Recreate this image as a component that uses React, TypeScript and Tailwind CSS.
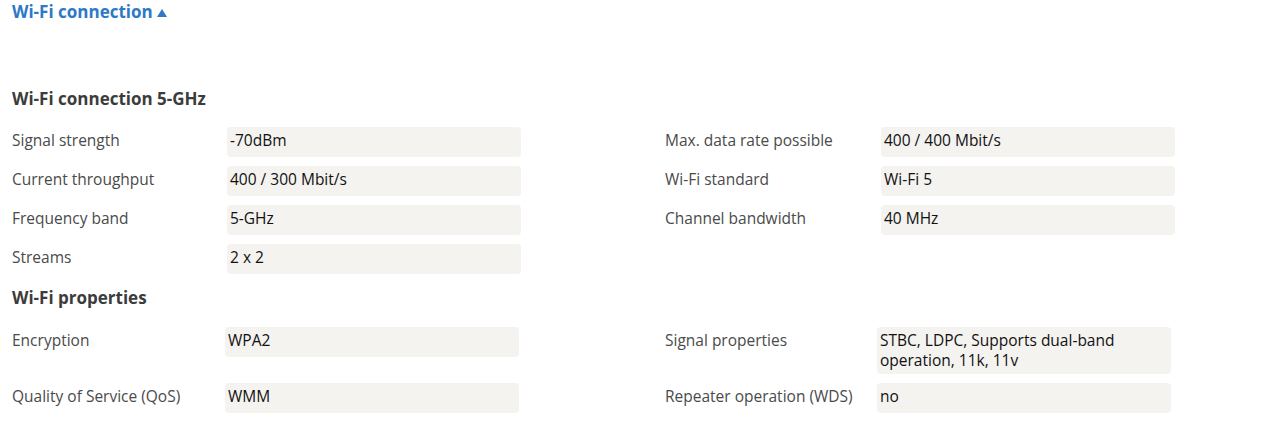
import React from "react";

const font = "font-['Open_Sans','Liberation_Sans',sans-serif]";

function Label({ children }: { children: React.ReactNode }) {
  return <div className="pt-[3px] text-[15.5px] leading-[20px] text-[#4a4a4a]">{children}</div>;
}

function Value({ children, h = "h-[30px]" }: { children: React.ReactNode; h?: string }) {
  return (
    <div className={`${h} rounded-[4px] bg-[#f4f3f0] px-[3px] pt-[3px] text-[15.5px] leading-[20px] text-[#111]`}>
      {children}
    </div>
  );
}

export default function App() {
  return (
    <div className={`${font} w-[1267px] h-[443px] bg-white pl-[12px]`}>
      <div className="flex items-center h-[24px] text-[17px] font-bold text-[#2d78c8]">
        <span>Wi-Fi connection</span>
        <svg width="10" height="8" viewBox="0 0 10 8" className="ml-[4px] mt-[1px]">
          <polygon points="5,0 10,8 0,8" fill="#2d78c8" />
        </svg>
      </div>

      <h2 className="mt-[63px] h-[24px] text-[17px] leading-[24px] font-bold text-[#3c3c3c]">
        Wi-Fi connection 5-GHz
      </h2>

      <div className="mt-[16px] grid grid-cols-[215px_294px_144px_216px_294px] gap-y-[9px]">
        <Label>Signal strength</Label>
        <Value>-70dBm</Value>
        <div />
        <Label>Max. data rate possible</Label>
        <Value>400 / 400 Mbit/s</Value>

        <Label>Current throughput</Label>
        <Value>400 / 300 Mbit/s</Value>
        <div />
        <Label>Wi-Fi standard</Label>
        <Value>Wi-Fi 5</Value>

        <Label>Frequency band</Label>
        <Value>5-GHz</Value>
        <div />
        <Label>Channel bandwidth</Label>
        <Value>40 MHz</Value>

        <Label>Streams</Label>
        <Value>2 x 2</Value>
      </div>

      <h2 className="mt-[12px] h-[24px] text-[17px] leading-[24px] font-bold text-[#3c3c3c]">
        Wi-Fi properties
      </h2>

      <div className="mt-[17px] grid grid-cols-[213px_294px_146px_212px_294px] gap-y-[9px]">
        <Label>Encryption</Label>
        <Value>WPA2</Value>
        <div />
        <Label>Signal properties</Label>
        <Value h="h-[47px]">STBC, LDPC, Supports dual-band operation, 11k, 11v</Value>

        <Label>Quality of Service (QoS)</Label>
        <Value>WMM</Value>
        <div />
        <Label>Repeater operation (WDS)</Label>
        <Value>no</Value>
      </div>
    </div>
  );
}
